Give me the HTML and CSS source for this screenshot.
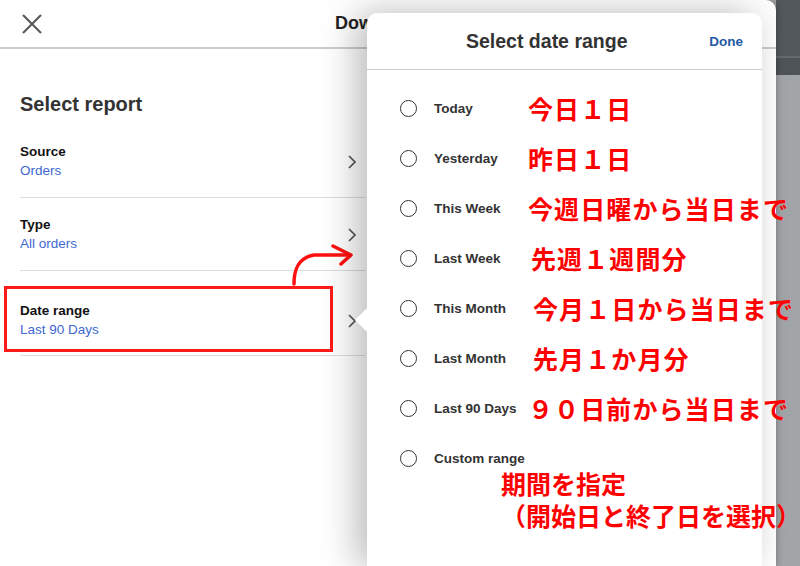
FILE: index.html
```html
<!DOCTYPE html>
<html lang="en">
<head>
  <meta charset="UTF-8">
  <title>Download report</title>
  <link rel="stylesheet" href="styles.css">
</head>
<body>
<div class="screen">
  <div class="modal">
    <header class="modal-head">
      <svg class="close" width="20" height="20" viewBox="0 0 20 20">
        <path d="M1 1L19 19M19 1L1 19" stroke="#555" stroke-width="2" fill="none"/>
      </svg>
      <h1 class="modal-title">Download report</h1>
    </header>

    <div class="modal-body">
      <div class="report-col">
        <h2 class="section-title">Select report</h2>
        <ul class="report-list">
          <li class="report-row">
            <div>
              <div class="row-label">Source</div>
              <div class="row-value">Orders</div>
            </div>
            <svg class="chevron" width="10" height="14" viewBox="0 0 10 14"><path d="M2 1L8 7L2 13" stroke="#555" stroke-width="1.7" fill="none"/></svg>
          </li>
          <li class="report-row">
            <div>
              <div class="row-label">Type</div>
              <div class="row-value">All orders</div>
            </div>
            <svg class="chevron" width="10" height="14" viewBox="0 0 10 14"><path d="M2 1L8 7L2 13" stroke="#555" stroke-width="1.7" fill="none"/></svg>
          </li>
          <li class="report-row report-row--date">
            <div>
              <div class="row-label">Date range</div>
              <div class="row-value">Last 90 Days</div>
            </div>
            <svg class="chevron" width="10" height="14" viewBox="0 0 10 14"><path d="M2 1L8 7L2 13" stroke="#555" stroke-width="1.7" fill="none"/></svg>
            <div class="red-box"></div>
          </li>
        </ul>
      </div>
    </div>

    <!-- hand drawn pointer to the popover -->
    <svg class="hint-arrow" width="90" height="60" viewBox="0 0 90 60">
      <path d="M14 44C14 31 17 18 34 15L70 15" stroke="#ff1010" stroke-width="3.5" fill="none" stroke-linecap="round"/>
      <path d="M53 6L71 15L61 24" stroke="#ff1010" stroke-width="3.5" fill="none" stroke-linecap="round" stroke-linejoin="round"/>
    </svg>

    <div class="popover">
      <div class="pop-head">
        <span class="pop-title">Select date range</span>
        <span class="pop-done">Done</span>
      </div>
      <ul class="range-list">
        <li class="range-row"><span class="radio"></span><span class="range-label">Today</span><span class="note">今日１日</span></li>
        <li class="range-row"><span class="radio"></span><span class="range-label">Yesterday</span><span class="note">昨日１日</span></li>
        <li class="range-row"><span class="radio"></span><span class="range-label">This Week</span><span class="note">今週日曜から当日まで</span></li>
        <li class="range-row"><span class="radio"></span><span class="range-label">Last Week</span><span class="note note--s1">先週１週間分</span></li>
        <li class="range-row"><span class="radio"></span><span class="range-label">This Month</span><span class="note note--s2">今月１日から当日まで</span></li>
        <li class="range-row"><span class="radio"></span><span class="range-label">Last Month</span><span class="note note--s2">先月１か月分</span></li>
        <li class="range-row"><span class="radio"></span><span class="range-label">Last 90 Days</span><span class="note">９０日前から当日まで</span></li>
        <li class="range-row"><span class="radio"></span><span class="range-label">Custom range</span></li>
      </ul>
      <div class="note-block">
        <div class="note-line">期間を指定</div>
        <div class="note-line">（開始日と終了日を選択）</div>
      </div>
    </div>
  </div>

  <div class="backdrop-side">
    <div class="side-top"></div>
    <div class="side-rest"></div>
  </div>
</div>
</body>
</html>
```

FILE: styles.css
```css
body {
  margin: 0;
  font-family: "Liberation Sans", Arial, sans-serif;
  background: #a2a5a8;
  overflow: hidden;
}
ul {
  list-style: none;
  margin: 0;
  padding: 0;
}
.screen {
  display: flex;
  width: 800px;
  height: 566px;
  overflow: hidden;
}
.modal {
  position: relative;
  width: 776px;
  height: 566px;
  background: #fff;
  border-top-right-radius: 10px;
  box-shadow: 0 0 6px rgba(0, 0, 0, 0.3);
  z-index: 1;
}
.modal-head {
  display: flex;
  align-items: center;
  height: 47px;
  border-bottom: 2px solid #cdcdcd;
}
.close {
  margin-left: 22px;
}
.modal-title {
  margin: 0 0 0 293px;
  font-size: 18px;
  font-weight: bold;
  color: #222;
}
.modal-body {
  display: grid;
  grid-template-columns: 367px 1fr;
}
.report-col {
  padding: 43px 2px 0 20px;
}
.section-title {
  margin: 0 0 9px;
  font-size: 20px;
  line-height: 24px;
  font-weight: bold;
  color: #333;
}
.report-row {
  position: relative;
  display: flex;
  align-items: center;
  justify-content: space-between;
  padding: 18px 8px 16px 0;
  border-bottom: 1px solid #dcdcdc;
}
.report-row--date {
  padding-top: 31px;
  padding-bottom: 15px;
}
.row-label {
  font-size: 13.5px;
  line-height: 18px;
  font-weight: bold;
  color: #111;
}
.row-value {
  font-size: 13.5px;
  line-height: 20px;
  color: #3d68d1;
}
.chevron {
  display: block;
}
.red-box {
  position: absolute;
  left: -16px;
  top: 15px;
  width: 323px;
  height: 60px;
  border: 3px solid #ff1a1a;
}
.hint-arrow {
  position: absolute;
  left: 280px;
  top: 240px;
}
.popover {
  position: absolute;
  left: 367px;
  top: 13px;
  width: 395px;
  height: 553px;
  background: #fff;
  border-radius: 10px 10px 0 0;
  box-shadow: -10px 0 36px rgba(0, 0, 0, 0.28);
  z-index: 2;
}
.popover::before {
  content: "";
  position: absolute;
  left: -12px;
  top: 294px;
  border-top: 13px solid transparent;
  border-bottom: 13px solid transparent;
  border-right: 13px solid #fff;
}
.pop-head {
  display: flex;
  align-items: center;
  justify-content: space-between;
  height: 56px;
  padding: 0 19px 0 99px;
  border-bottom: 1px solid #cccccc;
}
.pop-title {
  font-size: 19.5px;
  font-weight: bold;
  color: #333;
}
.pop-done {
  font-size: 13.5px;
  font-weight: bold;
  color: #1f5aa6;
}
.range-list {
  padding: 13px 0 0 33px;
}
.range-row {
  display: flex;
  align-items: center;
  height: 50px;
  white-space: nowrap;
}
.radio {
  flex-shrink: 0;
  width: 15px;
  height: 15px;
  border: 1.5px solid #333;
  border-radius: 50%;
  margin-right: 17px;
}
.range-label {
  flex-shrink: 0;
  width: 94px;
  font-size: 13.5px;
  font-weight: bold;
  color: #333;
}
.note {
  flex-shrink: 0;
  font-family: "Noto Sans CJK JP", sans-serif;
  font-size: 25px;
  line-height: 1;
  font-weight: bold;
  letter-spacing: 1.1px;
  color: #ff0000;
}
.note--s1 {
  margin-left: 3px;
}
.note--s2 {
  margin-left: 5px;
}
.note-block {
  display: flex;
  flex-direction: column;
  gap: 7px;
  margin: -12px 0 0 134px;
  white-space: nowrap;
  font-family: "Noto Sans CJK JP", sans-serif;
  font-size: 25px;
  font-weight: bold;
  color: #ff0000;
}
.note-line {
  line-height: 25px;
}
.backdrop-side {
  display: flex;
  flex-direction: column;
  flex: 1;
  min-width: 24px;
}
.side-top {
  height: 75px;
  background: linear-gradient(#53585d 0 56px, #666b70 56px 58px, #4f5459 58px);
}
.side-rest {
  flex: 1;
  background: #a2a5a8;
}
```
